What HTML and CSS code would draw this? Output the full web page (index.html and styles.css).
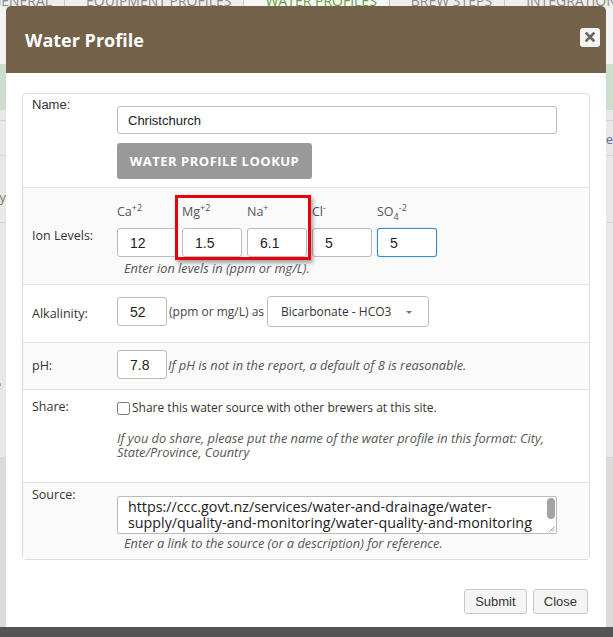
FILE: index.html
```html
<!DOCTYPE html>
<html lang="en">

<head>
    <meta charset="UTF-8">
    <meta name="viewport" content="width=device-width, initial-scale=1.0">
    <title>Water Profile</title>
    <link rel="stylesheet" href="styles.css">
</head>

<body>
    <div class="page">
        <div class="tabs">
            <span class="tab first">General</span>
            <span class="tab">Equipment Profiles</span>
            <span class="tab active">Water Profiles</span>
            <span class="tab">Brew Steps</span>
            <span class="tab">Integrations</span>
        </div>
        <div class="bg-top"></div>
        <div class="bg-green"></div>
        <div class="bg-line"></div>
        <div class="bg-row"><span class="frag-right">Compare</span></div>
        <div class="bg-row tall"><span class="frag-left">Apply</span></div>
        <div class="bg-mid">
            <span class="frag-left low">Profile</span>
            <span class="frag-left">Ions</span>
        </div>
        <div class="bg-low"></div>
    </div>
    <div class="footer-bar"></div>

    <div class="modal">
        <div class="modal-header">
            <h2>Water Profile</h2>
            <button class="close" title="Close">
                <svg width="10" height="10" viewBox="0 0 10 10">
                    <path d="M1.5 1.5 L8.5 8.5 M8.5 1.5 L1.5 8.5" stroke="#666" stroke-width="2.6" stroke-linecap="square" fill="none"/>
                </svg>
            </button>
        </div>
        <div class="modal-body">
            <div class="panel">
                <div class="row">
                    <label class="row-label name-label">Name:</label>
                    <div class="field name-field">
                        <input type="text" class="text-input" value="Christchurch">
                        <button class="lookup">Water Profile Lookup</button>
                    </div>
                </div>

                <div class="row alt">
                    <label class="row-label mid">Ion Levels:</label>
                    <div class="field ion-field">
                        <div class="ion-grid">
                            <div class="ion-name">Ca<sup>+2</sup></div>
                            <div class="ion-name">Mg<sup>+2</sup></div>
                            <div class="ion-name">Na<sup>+</sup></div>
                            <div class="ion-name">Cl<sup>-</sup></div>
                            <div class="ion-name">SO<sub>4</sub><sup>-2</sup></div>
                            <input type="text" class="ion-input" value="12">
                            <input type="text" class="ion-input" value="1.5">
                            <input type="text" class="ion-input" value="6.1">
                            <input type="text" class="ion-input" value="5">
                            <input type="text" class="ion-input focused" value="5">
                            <div class="highlight"></div>
                        </div>
                        <div class="help">Enter ion levels in (ppm or mg/L).</div>
                    </div>
                </div>

                <div class="row">
                    <label class="row-label mid">Alkalinity:</label>
                    <div class="field inline alk-field">
                        <input type="text" class="small-input" value="52">
                        <span class="unit">(ppm or mg/L) as</span>
                        <span class="select">
                            Bicarbonate - HCO3
                            <span class="caret"></span>
                        </span>
                    </div>
                </div>

                <div class="row alt">
                    <label class="row-label mid">pH:</label>
                    <div class="field inline ph-field">
                        <input type="text" class="small-input" value="7.8">
                        <span class="note">If pH is not in the report, a default of 8 is reasonable.</span>
                    </div>
                </div>

                <div class="row">
                    <label class="row-label share-label">Share:</label>
                    <div class="field share-field">
                        <label class="check"><input type="checkbox"> Share this water source with other brewers at this site.</label>
                        <div class="share-note">If you do share, please put the name of the water profile in this format: City, State/Province, Country</div>
                    </div>
                </div>

                <div class="row alt">
                    <label class="row-label source-label">Source:</label>
                    <div class="field source-field">
                        <div class="source-wrap">
                            <textarea class="source">https://ccc.govt.nz/services/water-and-drainage/water-
supply/quality-and-monitoring/water-quality-and-monitoring</textarea>
                            <span class="thumb"></span>
                            <svg class="grip" width="6" height="6" viewBox="0 0 6 6">
                                <path d="M0.5 5.5 L5.5 0.5 M3 5.5 L5.5 3" stroke="#999" stroke-width="1" fill="none"/>
                            </svg>
                        </div>
                        <div class="help">Enter a link to the source (or a description) for reference.</div>
                    </div>
                </div>
            </div>
        </div>
        <div class="modal-footer">
            <button class="btn">Submit</button>
            <button class="btn">Close</button>
        </div>
    </div>
</body>

</html>
```

FILE: styles.css
```css
body {
    margin: 0;
    width: 613px;
    height: 637px;
    overflow: hidden;
    position: relative;
    font-family: 'Open Sans', sans-serif;
    font-size: 12px;
    color: #333;
}

/* page behind the dialog */
.page {
    height: 627px;
    background-color: #e8e8e8;
    display: flex;
    flex-direction: column;
}

.tabs {
    height: 8px;
    overflow: hidden;
    display: flex;
    background-color: #eeeeee;
    font-size: 14px;
    text-transform: uppercase;
    color: #888;
    white-space: nowrap;
}

.tab {
    line-height: 14px;
    margin-top: -6px;
    padding: 0 12px 0 21px;
    border-right: 1px solid #ccc;
}

.tab.first {
    margin-left: -30px;
}

.tab.active {
    color: #6a9f3a;
    background-color: #f6f6f6;
    border-right-color: #a9c98f;
}

.bg-top {
    height: 56px;
    background-color: #f3f3f3;
}

.bg-green {
    height: 46px;
    background-color: #cddecd;
}

.bg-line {
    height: 10px;
    border-bottom: 1px solid #d2d2d2;
}

.bg-row {
    height: 34px;
    border-bottom: 1px solid #d2d2d2;
}

.bg-row.tall {
    height: 66px;
}

.bg-mid {
    height: 234px;
    border-bottom: 1px solid #d6d6d6;
}

.bg-low {
    flex: 1;
    background-color: #dcdbd7;
}

.frag-left {
    display: block;
    margin-left: -28px;
    color: #8a7d60;
    font-size: 13px;
    padding-top: 32px;
}

.bg-mid .frag-left {
    color: #777;
    padding-top: 0;
}

.bg-mid .frag-left.low {
    padding-top: 152px;
    margin-left: -38px;
}

.frag-right {
    display: block;
    text-align: right;
    padding-top: 9px;
    color: #6d5fa0;
    font-size: 13px;
}

.footer-bar {
    height: 10px;
    background-color: #555;
}

/* dialog */
.modal {
    position: absolute;
    left: 6px;
    top: 6px;
    width: 600px;
    height: 621px;
    background-color: white;
    border-radius: 5px 5px 0 0;
}

.modal-header {
    height: 67px;
    background-color: #736249;
    border-radius: 5px 5px 0 0;
    display: flex;
    align-items: center;
    justify-content: space-between;
    padding: 0 6px 0 19px;
}

.modal-header h2 {
    margin: 0;
    font-size: 18px;
    font-weight: 700;
    color: white;
}

.close {
    width: 20px;
    height: 19px;
    margin-bottom: 5px;
    padding: 0;
    border: none;
    border-radius: 3px;
    background-color: #f4f4f4;
    display: flex;
    align-items: center;
    justify-content: center;
}

.modal-body {
    padding: 20px 16px 0;
}

.panel {
    border: 1px solid #ddd;
    border-radius: 4px;
}

.row {
    display: flex;
    border-top: 1px solid #e3e3e3;
}

.row:first-child {
    border-top: none;
}

.row.alt {
    background-color: #fafafa;
}

.row-label {
    width: 85px;
    padding-left: 9px;
    flex: none;
    line-height: 18px;
    font-size: 12.5px;
}

.row-label.mid {
    align-self: center;
}

.name-label {
    font-family: 'Liberation Sans', Arial, sans-serif;
    font-size: 13px;
    line-height: 15px;
    padding-top: 3px;
}

.share-label {
    padding-top: 8px;
}

.source-label {
    padding-top: 3px;
}

.field {
    flex: 1;
}

.field.inline {
    display: flex;
    align-items: center;
}

input[type="text"] {
    box-sizing: border-box;
    border: 1px solid #bbb;
    border-radius: 3px;
    background-color: white;
    color: #222;
    font-family: 'Liberation Sans', Arial, sans-serif;
    outline: none;
}

.name-field {
    padding: 12px 0 8px;
}

.text-input {
    display: block;
    width: 440px;
    height: 28px;
    padding: 0 10px;
    font-size: 13px;
}

.lookup {
    display: block;
    margin-top: 9px;
    width: 195px;
    height: 36px;
    border: none;
    border-radius: 3px;
    background-color: #999;
    color: white;
    font-family: 'Open Sans', sans-serif;
    font-size: 13px;
    font-weight: 700;
    letter-spacing: 0.5px;
    text-transform: uppercase;
}

.ion-field {
    padding: 15px 0 8px;
}

.ion-grid {
    display: grid;
    grid-template-columns: repeat(5, 60px);
    column-gap: 5px;
    row-gap: 7px;
    position: relative;
}

.ion-name {
    line-height: 18px;
    font-size: 12.5px;
    color: #555;
}

sup, sub {
    font-size: 9px;
    line-height: 0;
}

.ion-input {
    width: 60px;
    height: 29px;
    padding-left: 12px;
    font-size: 14px;
}

.ion-input.focused {
    border-color: #3b8bd0;
    box-shadow: 0 0 1px #3b8bd0;
}

.highlight {
    position: absolute;
    left: 58px;
    top: -8px;
    width: 130px;
    height: 59px;
    border: 3px solid #e8000d;
    box-shadow: 2px 3px 4px rgba(0, 0, 0, 0.35);
    pointer-events: none;
}

.help {
    margin-top: 3px;
    padding-left: 7px;
    font-size: 12.8px;
    font-style: italic;
    line-height: 16px;
    color: #555;
}

.alk-field {
    padding: 11px 0 15px;
}

.ph-field {
    padding: 7px 0 10px;
}

.small-input {
    width: 50px;
    height: 29px;
    padding-left: 12px;
    font-size: 14px;
}

.unit {
    margin: 0 3px 0 2px;
    color: #444;
}

.select {
    position: relative;
    box-sizing: border-box;
    width: 162px;
    height: 31px;
    padding-left: 13px;
    border: 1px solid #bbb;
    border-radius: 4px;
    background-color: white;
    display: flex;
    align-items: center;
    color: #333;
}

.caret {
    position: absolute;
    right: 16px;
    top: 14px;
    border-left: 3px solid transparent;
    border-right: 3px solid transparent;
    border-top: 3px solid #777;
}

.note {
    margin-left: 1px;
    font-size: 12.8px;
    font-style: italic;
    color: #555;
}

.share-field {
    padding: 9px 0 23px;
}

.check {
    display: flex;
    align-items: center;
    line-height: 18px;
    color: #333;
}

.check input {
    margin: 0 2px 0 0;
    width: 13px;
    height: 13px;
}

.share-note {
    margin-top: 14px;
    padding-right: 10px;
    font-size: 12.8px;
    font-style: italic;
    line-height: 14px;
    color: #555;
}

.source-field {
    padding: 13px 0 8px;
}

.source-wrap {
    position: relative;
    width: 440px;
}

.source {
    display: block;
    box-sizing: border-box;
    width: 440px;
    height: 38px;
    margin: 0;
    padding: 2px 10px 0;
    border: 1px solid #bbb;
    border-radius: 2px;
    font-family: 'Open Sans', sans-serif;
    font-size: 14.3px;
    line-height: 16px;
    color: #222;
    overflow: hidden;
    resize: none;
    white-space: pre;
}

.thumb {
    position: absolute;
    right: 2px;
    top: 2px;
    width: 8px;
    height: 21px;
    border-radius: 4px;
    background-color: #a3a3a3;
}

.grip {
    position: absolute;
    right: 2px;
    bottom: 2px;
}

.source-field .help {
    margin-top: 1px;
}

.modal-footer {
    padding: 29px 18px 0;
    text-align: right;
}

.btn {
    height: 25px;
    padding: 0 10px;
    margin-left: 3px;
    border: 1px solid #c8c8c8;
    border-radius: 3px;
    background-color: #f5f5f5;
    color: #333;
    font-family: 'Liberation Sans', Arial, sans-serif;
    font-size: 13px;
}
```
